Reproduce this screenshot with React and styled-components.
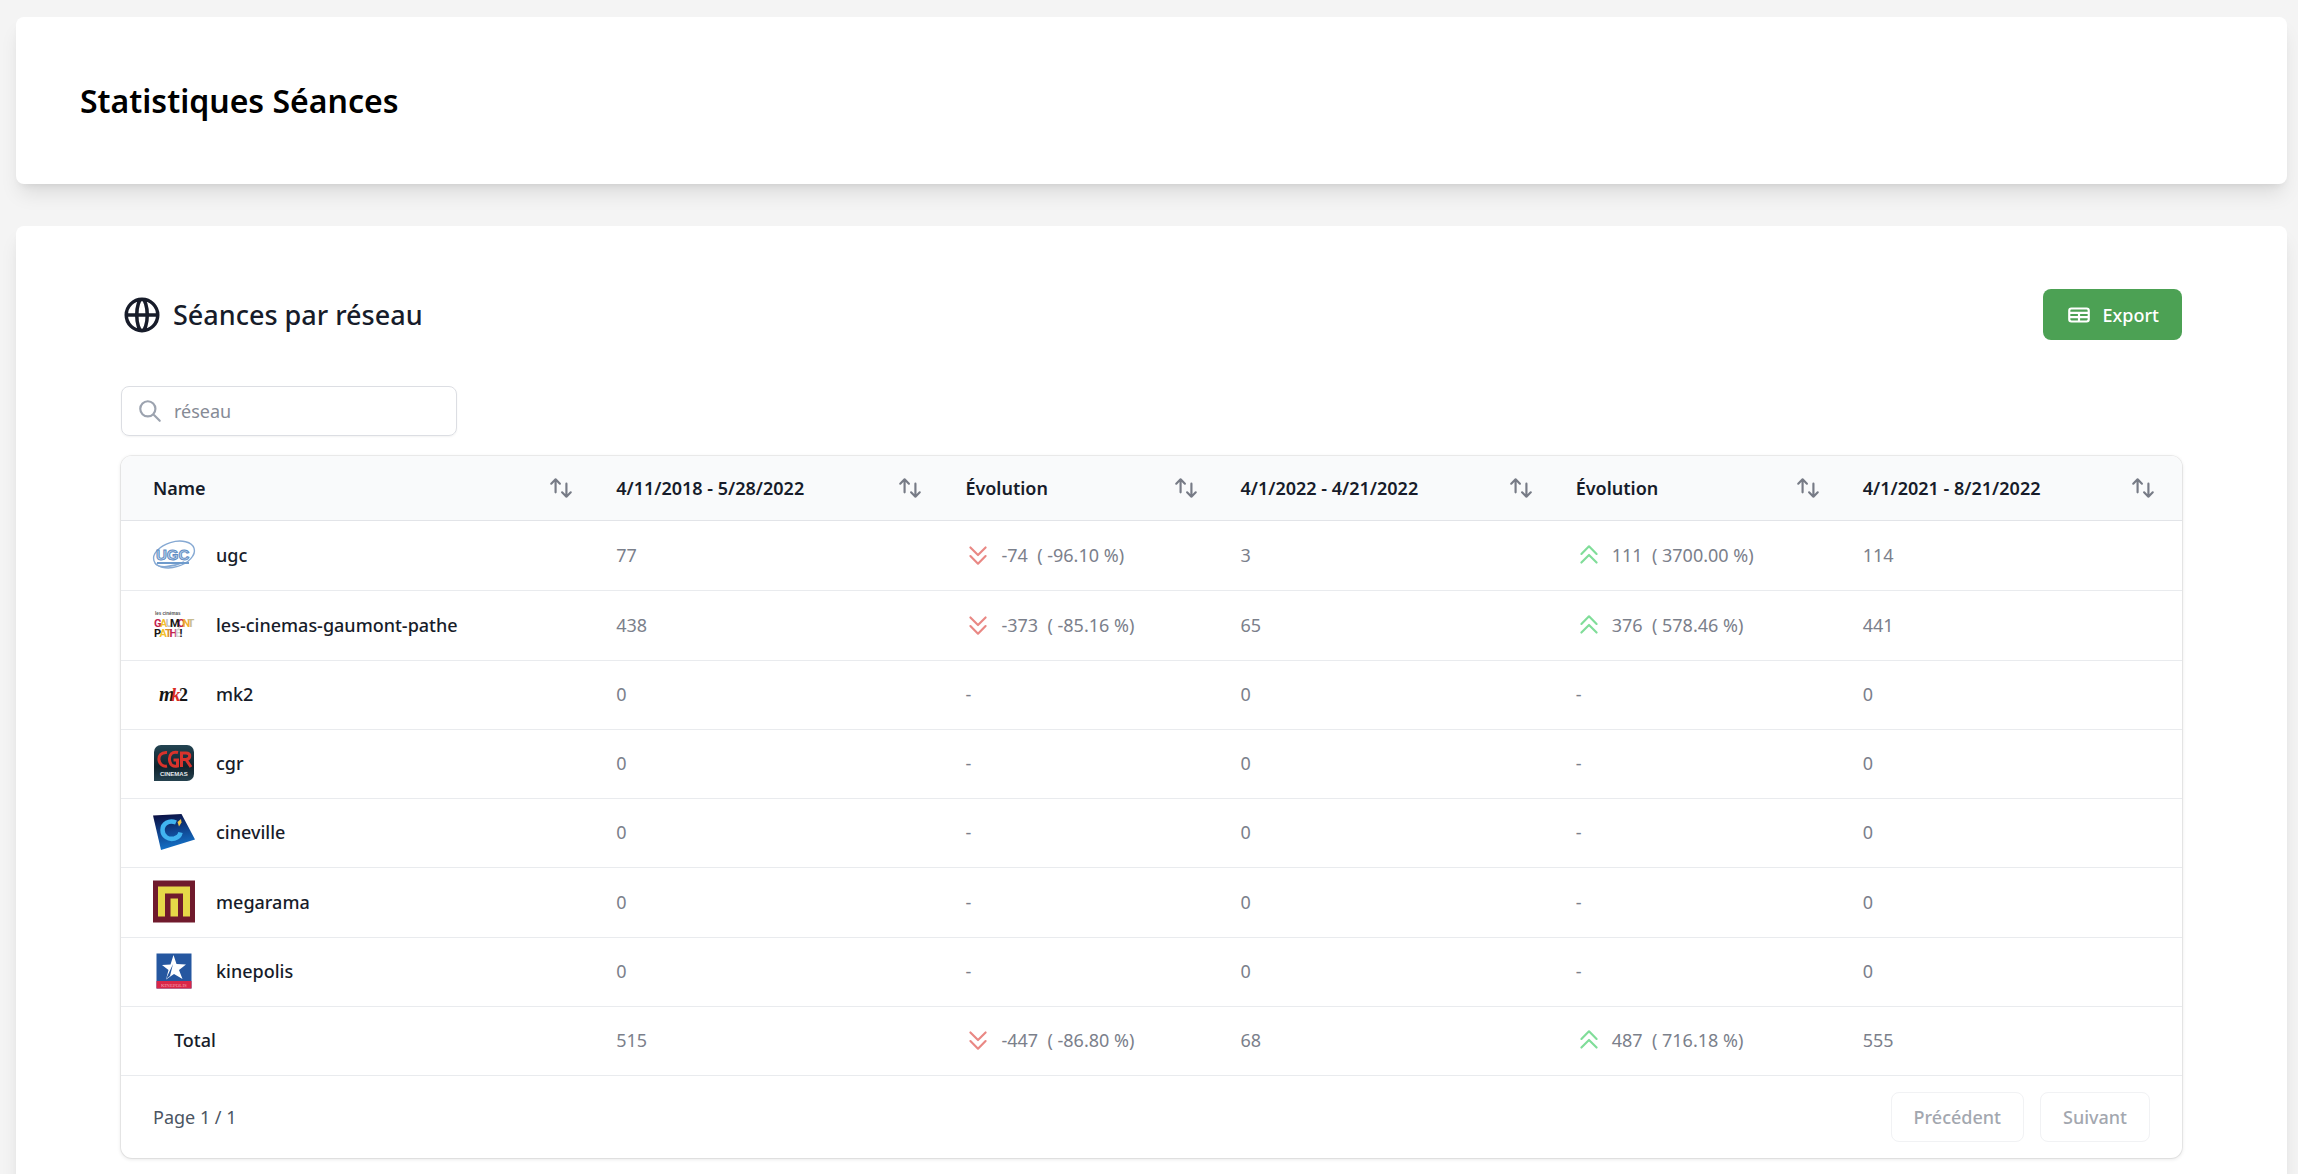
import styled, { createGlobalStyle } from 'styled-components';

const GlobalStyle = createGlobalStyle`
  * { box-sizing: border-box; }
  body {
    margin: 0; background: #f4f4f4; color: #171c2a;
    font-family: 'Noto Sans', 'Open Sans', sans-serif;
    font-size: 18px; line-height: 26px;
  }
  button, input { font: inherit; }
  h1, h2, p { margin: 0; }
`;

const Page = styled.main`
  display: flex; flex-direction: column; gap: 42px;
  height: 100vh; overflow: hidden;
  padding: 17px 11px 0 16px;
`;
const Card = styled.section`
  flex: none; background: #fff; border-radius: 8px;
  padding: ${({ $wide }) => ($wide ? '63px 105px' : '63px 64px')};
  box-shadow: 0 13px 20px -4px rgba(0, 0, 0, 0.1), 0 5px 8px -5px rgba(0, 0, 0, 0.1);
`;
const Title = styled.h1`font-size: 32px; line-height: 41px; font-weight: 600; color: #000;`;
const CardHead = styled.div`
  display: flex; align-items: center; justify-content: space-between;
  margin-bottom: 46px;
`;
const Heading = styled.h2`
  display: flex; align-items: center; gap: 10px;
  font-size: 27px; line-height: 42px; font-weight: 500;
`;
const ExportBtn = styled.button`
  display: inline-flex; align-items: center; gap: 11px;
  height: 51px; padding: 0 23px; border: 0; border-radius: 8px;
  background: #4ca154; color: #fff; font-weight: 500; cursor: pointer;
`;
const Search = styled.label`
  display: flex; align-items: center; gap: 11px;
  width: 336px; height: 50px; padding: 0 15px; margin-bottom: 20px;
  border: 1px solid #dcdee3; border-radius: 8px; color: #9ca3af;
  box-shadow: 0 1px 2px rgba(0, 0, 0, 0.05);
`;
const SearchInput = styled.input`
  flex: 1; min-width: 0; padding: 0; border: 0; outline: 0;
  background: transparent; color: #171c2a;
  &::placeholder { color: #868b96; opacity: 1; }
`;
const Svg = styled.svg`
  display: block; flex: none; fill: none; stroke: currentColor;
  stroke-linecap: round; stroke-linejoin: round;
`;
const Panel = styled.div`
  border-radius: 11px; overflow: hidden; background: #fff;
  box-shadow: 0 0 0 1px rgba(0, 0, 0, 0.06), 0 1px 4px rgba(0, 0, 0, 0.12);
`;
const Table = styled.table`width: 100%; table-layout: fixed; border-collapse: collapse;`;
const Th = styled.th`
  padding: 0 10px 0 32px; text-align: left; font-weight: 600;
  background: #f9fafb; border-bottom: 1px solid #e2e4e8;
  &:last-child { padding-right: 26px; }
`;
const SortBtn = styled.button`
  display: flex; align-items: center; justify-content: space-between;
  width: 100%; height: 64px; padding: 0; border: 0;
  background: transparent; color: inherit; cursor: pointer;
  svg { color: #777b86; }
`;
const Td = styled.td`
  padding: 12px 10px 14px 32px; color: #7b808b;
  border-bottom: 1px solid #e9ebee;
`;
const NameCell = styled.div`
  display: flex; align-items: center; gap: 21px;
  min-height: 42px; padding-left: ${({ $total }) => ($total ? '21px' : 0)};
  color: #171c2a; font-weight: 500;
`;
const Logo = styled.svg`display: block; flex: none; width: 42px; overflow: visible;`;
const Trend = styled.div`
  display: flex; align-items: center; gap: 10px;
  svg { color: ${({ $up }) => ($up ? '#80dd99' : '#e98884')}; }
`;
const Footer = styled.div`
  display: flex; align-items: center; justify-content: space-between;
  padding: 16px 32px; color: #4b5563;
`;
const Pager = styled.div`display: flex; gap: 16px;`;
const PageBtn = styled.button`
  height: 50px; padding: 0 22px; border: 1px solid #f1f2f4; border-radius: 8px;
  background: #fff; color: #a3a7af; font-weight: 500;
`;

const ICONS = {
  globe: 'M21 12a9 9 0 01-9 9m9-9a9 9 0 00-9-9m9 9H3m9 9a9 9 0 01-9-9m9 9c1.657 0 3-4.03 3-9s-1.343-9-3-9m0 18c-1.657 0-3-4.03-3-9s1.343-9 3-9m-9 9a9 9 0 019-9',
  table: 'M3 10h18M3 14h18m-9-4v8m-7 0h14a2 2 0 002-2V8a2 2 0 00-2-2H5a2 2 0 00-2 2v8a2 2 0 002 2z',
  search: 'M21 21l-6-6m2-5a7 7 0 11-14 0 7 7 0 0114 0z',
  sort: 'M7 16V4m0 0L3 8m4-4l4 4m6 0v12m0 0l4-4m-4 4l-4-4',
  down: 'M19 13l-7 7-7-7m14-8l-7 7-7-7',
  up: 'M5 11l7-7 7 7M5 19l7-7 7 7',
};

const Icon = ({ name, size = 26, weight = 2 }) => (
  <Svg viewBox="0 0 24 24" width={size} height={size} strokeWidth={weight} aria-hidden="true">
    <path d={ICONS[name]} />
  </Svg>
);

const UgcLogo = () => (
  <Logo height="43" viewBox="0 0 42 43" aria-hidden="true">
    <g fill="none" stroke="#86a9d3">
      <ellipse cx="21" cy="21.500" rx="21" ry="12.500" strokeWidth="1.400" transform="rotate(-17 21 21.5)" />
      <path d="M2 30C5 36 20 34 31 29" strokeWidth="1.600" />
      <path d="M4 30H36" stroke="#6f9bcc" strokeWidth="2" />
    </g>
    <text x="3" y="27" fontFamily="Liberation Sans" fontSize="15" fontWeight="700" fill="#c3d6ec" stroke="#5f8dc3" strokeWidth="1">UGC</text>
  </Logo>
);

const GaumontLogo = () => (
  <Logo height="43" viewBox="0 0 42 43" aria-hidden="true">
    <text x="2" y="12" fontFamily="Liberation Sans" fontSize="4.500" fontWeight="700" fill="#555">les cinémas</text>
    <g fontFamily="Liberation Sans Narrow, Roboto" fontSize="11" fontWeight="700" strokeWidth="0.300">
      <text x="1" y="23.500" fill="#c32350">G</text>
      <text x="7" y="23.500" fill="#f3c02c">A</text>
      <text x="12.500" y="23.500" fill="#c4c6c6">U</text>
      <text x="24.500" y="23.500" fill="#c32350">O</text>
      <text x="29.500" y="23.500" fill="#f0b030">N</text>
      <text x="34.500" y="23.500" fill="#c8bc90">T</text>
      <text x="17" y="23.500" fill="#161616">M</text>
      <text x="1" y="34" fill="#161616">P</text>
      <text x="6.500" y="34" fill="#f3c02c">A</text>
      <text x="12" y="34" fill="#d9902c">T</text>
      <text x="16.500" y="34" fill="#c32350">H</text>
      <text x="22" y="34" fill="#d2d2d2">É</text>
      <text x="26.500" y="34" fill="#161616">!</text>
    </g>
  </Logo>
);

const Mk2Logo = () => (
  <Logo height="42" viewBox="0 0 42 42" aria-hidden="true">
    <g fontFamily="Liberation Serif" fontWeight="700">
      <text x="6" y="28" fontSize="20" fontStyle="italic" fill="#151515">m</text>
      <text x="26" y="28" fontSize="18" fill="#151515">2</text>
      <text x="18" y="28" fontSize="19" fontStyle="italic" fill="#d92a22">k</text>
    </g>
  </Logo>
);

const CgrLogo = () => (
  <Logo height="42" viewBox="0 0 42 42" aria-hidden="true">
    <defs>
      <linearGradient id="cgr" x1="0" y1="0" x2="0" y2="1">
        <stop offset="0" stopColor="#234452" />
        <stop offset="0.6" stopColor="#10222c" />
        <stop offset="1" stopColor="#25424f" />
      </linearGradient>
    </defs>
    <path d="M1 10a7 7 0 017-7h26a7 7 0 017 7v22a7 7 0 01-7 7H1z" fill="url(#cgr)" />
    <g fill="none" stroke="#d8332c" strokeWidth="3">
      <path d="M14 10.500C8 10 5.500 14 6 18c.5 4 4 7 8 6" />
      <path d="M25 10.500C19 9 16 13 16.500 18c.5 5 3.500 7 8 6v-6h-4" />
      <path d="M28.500 25V11h4.500c5 0 5 6 0 6.500h-3m3 0L38 25" />
    </g>
    <text x="7" y="34" fontFamily="Liberation Sans" fontSize="6" fontWeight="700" fill="#e5ebed">CINEMAS</text>
  </Logo>
);

const CinevilleLogo = () => (
  <Logo height="42" viewBox="0 0 42 42" aria-hidden="true">
    <defs>
      <linearGradient id="cineville" x1="0.300" y1="0" x2="0.500" y2="1">
        <stop offset="0" stopColor="#0b1144" />
        <stop offset="0.5" stopColor="#104590" />
        <stop offset="1" stopColor="#1476cd" />
      </linearGradient>
    </defs>
    <path d="M0 4.500L28.500 3 42 28.500 8 39z" fill="url(#cineville)" />
    <path d="M23 11.500C16 8.500 9.500 12.500 9.500 19s6 10 12 8.500c3.500-1 5.500-3.500 6-6" fill="none" stroke="#41b4f0" strokeWidth="4.500" />
    <path d="M24.500 11l3.500-3 .5 3.500-2.500 4z" fill="#f2c84a" />
  </Logo>
);

const MegaramaLogo = () => (
  <Logo height="43" viewBox="0 0 42 43" aria-hidden="true">
    <path d="M0 0.500h42v42H0z" fill="#701a2c" />
    <path d="M5 6.500h32v30h-7v-23H12v23H5zM17.500 18.500h7.500v18h-7.500z" fill="#e6d848" />
  </Logo>
);

const KinepolisLogo = () => (
  <Logo height="42" viewBox="0 0 42 42" aria-hidden="true">
    <path d="M3.500 3.500h35v35h-35z" fill="#2557a0" />
    <path d="M3.500 31h35v7.500h-35z" fill="#d92648" />
    <path d="M20.500 5l3 9 9.500.5-7 5.500 3.500 9-8.500-5-8 5.500 2.500-9.500-6.500-5 8.500-.5z" fill="#fff" />
    <path d="M20 14l-3 12-4 3z" fill="#2557a0" />
    <text x="8" y="37" fontFamily="Liberation Serif" fontSize="5" fill="#f4a3b2">KINEPOLIS</text>
  </Logo>
);

const columns = [
  { label: 'Name', width: 463 },
  { label: '4/11/2018 - 5/28/2022', width: 349 },
  { label: 'Évolution', width: 275 },
  { label: '4/1/2022 - 4/21/2022', width: 335 },
  { label: 'Évolution', width: 287 },
  { label: '4/1/2021 - 8/21/2022', width: 351 },
];

const rows = [
  { name: 'ugc', logo: UgcLogo, counts: [77, 3, 114], evolutions: [[-74, '-96.10'], [111, '3700.00']] },
  { name: 'les-cinemas-gaumont-pathe', logo: GaumontLogo, counts: [438, 65, 441], evolutions: [[-373, '-85.16'], [376, '578.46']] },
  { name: 'mk2', logo: Mk2Logo, counts: [0, 0, 0], evolutions: [] },
  { name: 'cgr', logo: CgrLogo, counts: [0, 0, 0], evolutions: [] },
  { name: 'cineville', logo: CinevilleLogo, counts: [0, 0, 0], evolutions: [] },
  { name: 'megarama', logo: MegaramaLogo, counts: [0, 0, 0], evolutions: [] },
  { name: 'kinepolis', logo: KinepolisLogo, counts: [0, 0, 0], evolutions: [] },
  { name: 'Total', counts: [515, 68, 555], evolutions: [[-447, '-86.80'], [487, '716.18']] },
];

const Evolution = ({ value }) => {
  if (!value) return '-';
  const [diff, percent] = value;
  return (
    <Trend $up={diff > 0}>
      <Icon name={diff > 0 ? 'up' : 'down'} />
      <span>{diff}&nbsp; ( {percent} %)</span>
    </Trend>
  );
};

const NetworkRow = ({ row }) => {
  const RowLogo = row.logo;
  return (
    <tr>
      <Td>
        <NameCell $total={!RowLogo}>
          {RowLogo && <RowLogo />}
          {row.name}
        </NameCell>
      </Td>
      <Td>{row.counts[0]}</Td>
      <Td><Evolution value={row.evolutions[0]} /></Td>
      <Td>{row.counts[1]}</Td>
      <Td><Evolution value={row.evolutions[1]} /></Td>
      <Td>{row.counts[2]}</Td>
    </tr>
  );
};

const App = () => (
  <>
    <GlobalStyle />
    <Page>
      <Card>
        <Title>Statistiques Séances</Title>
      </Card>
      <Card $wide>
        <CardHead>
          <Heading><Icon name="globe" size={42} />Séances par réseau</Heading>
          <ExportBtn type="button"><Icon name="table" />Export</ExportBtn>
        </CardHead>
        <Search>
          <Icon name="search" />
          <SearchInput type="text" placeholder="réseau" aria-label="réseau" />
        </Search>
        <Panel>
          <Table>
            <colgroup>
              {columns.map((col, i) => <col key={i} width={col.width} />)}
            </colgroup>
            <thead>
              <tr>
                {columns.map((col, i) => (
                  <Th key={i} scope="col">
                    <SortBtn type="button">{col.label}<Icon name="sort" /></SortBtn>
                  </Th>
                ))}
              </tr>
            </thead>
            <tbody>
              {rows.map((row) => <NetworkRow key={row.name} row={row} />)}
            </tbody>
          </Table>
          <Footer>
            <p>Page 1 / 1</p>
            <Pager>
              <PageBtn type="button" disabled>Précédent</PageBtn>
              <PageBtn type="button" disabled>Suivant</PageBtn>
            </Pager>
          </Footer>
        </Panel>
      </Card>
    </Page>
  </>
);

export default App;
